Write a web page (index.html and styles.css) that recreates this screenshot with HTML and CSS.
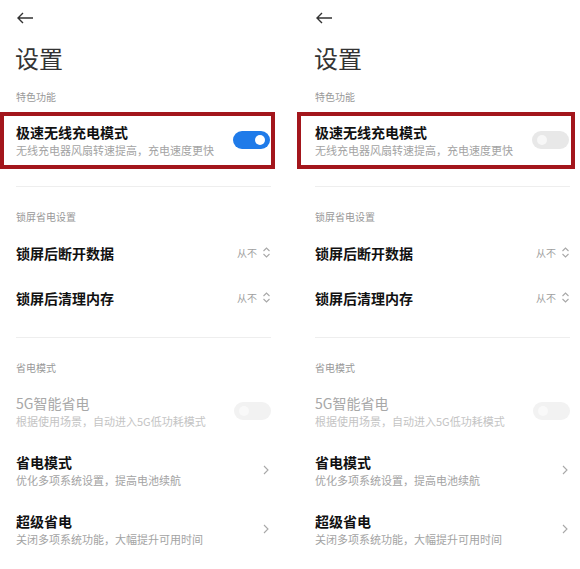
FILE: index.html
```html
<!DOCTYPE html>
<html lang="zh-CN">

<head>
    <meta charset="UTF-8">
    <meta name="viewport" content="width=device-width, initial-scale=1.0">
    <title>设置</title>
    <link rel="stylesheet" href="styles.css">
</head>

<body>
    <main class="compare">
        <!-- left: wireless fast charge on -->
        <section class="panel">
            <div class="back">
                <svg width="18" height="12" viewBox="0 0 18 12"><path d="M17 6H2M7 1L2 6l5 5" /></svg>
            </div>
            <h1 class="page-title">设置</h1>

            <div class="group-label first">特色功能</div>
            <div class="row marked">
                <div class="texts">
                    <div class="name">极速无线充电模式</div>
                    <div class="desc">无线充电器风扇转速提高，充电速度更快</div>
                </div>
                <span class="switch on"></span>
            </div>

            <hr class="divider first-divider">

            <div class="group-label">锁屏省电设置</div>
            <div class="row plain">
                <div class="name">锁屏后断开数据</div>
                <div class="value">从不
                    <svg width="9" height="13" viewBox="0 0 9 13"><path d="M1.5 5L4.5 2l3 3M1.5 8l3 3 3-3" /></svg>
                </div>
            </div>
            <div class="row plain">
                <div class="name">锁屏后清理内存</div>
                <div class="value">从不
                    <svg width="9" height="13" viewBox="0 0 9 13"><path d="M1.5 5L4.5 2l3 3M1.5 8l3 3 3-3" /></svg>
                </div>
            </div>

            <hr class="divider">

            <div class="group-label">省电模式</div>
            <div class="row tall disabled">
                <div class="texts">
                    <div class="name">5G智能省电</div>
                    <div class="desc">根据使用场景，自动进入5G低功耗模式</div>
                </div>
                <span class="switch off-disabled"></span>
            </div>
            <div class="row tall">
                <div class="texts">
                    <div class="name">省电模式</div>
                    <div class="desc">优化多项系统设置，提高电池续航</div>
                </div>
                <svg class="chevron" width="6" height="10" viewBox="0 0 6 10"><path d="M1 1l4 4-4 4" /></svg>
            </div>
            <div class="row tall">
                <div class="texts">
                    <div class="name">超级省电</div>
                    <div class="desc">关闭多项系统功能，大幅提升可用时间</div>
                </div>
                <svg class="chevron" width="6" height="10" viewBox="0 0 6 10"><path d="M1 1l4 4-4 4" /></svg>
            </div>
        </section>

        <!-- right: wireless fast charge off -->
        <section class="panel">
            <div class="back">
                <svg width="18" height="12" viewBox="0 0 18 12"><path d="M17 6H2M7 1L2 6l5 5" /></svg>
            </div>
            <h1 class="page-title">设置</h1>

            <div class="group-label first">特色功能</div>
            <div class="row marked wide">
                <div class="texts">
                    <div class="name">极速无线充电模式</div>
                    <div class="desc">无线充电器风扇转速提高，充电速度更快</div>
                </div>
                <span class="switch"></span>
            </div>

            <hr class="divider first-divider">

            <div class="group-label">锁屏省电设置</div>
            <div class="row plain">
                <div class="name">锁屏后断开数据</div>
                <div class="value">从不
                    <svg width="9" height="13" viewBox="0 0 9 13"><path d="M1.5 5L4.5 2l3 3M1.5 8l3 3 3-3" /></svg>
                </div>
            </div>
            <div class="row plain">
                <div class="name">锁屏后清理内存</div>
                <div class="value">从不
                    <svg width="9" height="13" viewBox="0 0 9 13"><path d="M1.5 5L4.5 2l3 3M1.5 8l3 3 3-3" /></svg>
                </div>
            </div>

            <hr class="divider">

            <div class="group-label">省电模式</div>
            <div class="row tall disabled">
                <div class="texts">
                    <div class="name">5G智能省电</div>
                    <div class="desc">根据使用场景，自动进入5G低功耗模式</div>
                </div>
                <span class="switch off-disabled"></span>
            </div>
            <div class="row tall">
                <div class="texts">
                    <div class="name">省电模式</div>
                    <div class="desc">优化多项系统设置，提高电池续航</div>
                </div>
                <svg class="chevron" width="6" height="10" viewBox="0 0 6 10"><path d="M1 1l4 4-4 4" /></svg>
            </div>
            <div class="row tall">
                <div class="texts">
                    <div class="name">超级省电</div>
                    <div class="desc">关闭多项系统功能，大幅提升可用时间</div>
                </div>
                <svg class="chevron" width="6" height="10" viewBox="0 0 6 10"><path d="M1 1l4 4-4 4" /></svg>
            </div>
        </section>
    </main>
</body>

</html>
```

FILE: styles.css
```css
body, html {
    margin: 0;
    padding: 0;
    background-color: #ffffff;
    font-family: 'Noto Sans CJK SC', 'Noto Sans', sans-serif;
}

.compare {
    display: grid;
    grid-template-columns: 281px 281px;
    column-gap: 18px;
    width: 580px;
    height: 569px;
    overflow: hidden;
}

.panel {
    padding: 0 10px 0 16px;
}

.back {
    height: 26px;
    padding-top: 12px;
    box-sizing: border-box;
}

.back svg {
    display: block;
}

.back path {
    fill: none;
    stroke: #333333;
    stroke-width: 1.4;
}

.page-title {
    margin: 16px 0 0 -1px;
    font-size: 24px;
    line-height: 32px;
    font-weight: 400;
    color: #333333;
}

.group-label {
    margin-top: 22px;
    font-size: 10px;
    line-height: 15px;
    color: #999999;
}

.group-label.first {
    margin-top: 15px;
}

.row {
    display: flex;
    align-items: center;
    justify-content: space-between;
}

.name {
    font-size: 14px;
    line-height: 20px;
    font-weight: 700;
    color: #111111;
}

.desc {
    font-size: 11px;
    line-height: 16px;
    color: #a3a3a3;
    white-space: nowrap;
}

.row.marked {
    margin: 8px -4px 0 -16px;
    padding: 6px 1px 7px 12px;
    border: 4px solid #a3161c;
}

.row.marked.wide {
    margin-left: -18px;
    margin-right: -5px;
    padding-left: 14px;
    padding-right: 2px;
}

.row.plain {
    height: 45px;
}

.group-label + .row.plain {
    margin-top: 6px;
}

.row.tall {
    height: 59px;
}

.group-label + .row.tall {
    margin-top: 6px;
}

.row.disabled .name {
    font-weight: 400;
    color: #a8a8a8;
}

.row.disabled .desc {
    color: #c4c4c4;
}

.value {
    display: flex;
    align-items: center;
    gap: 5px;
    font-size: 10px;
    color: #a0a0a0;
}

.value path,
.chevron path {
    fill: none;
    stroke: #a8a8a8;
    stroke-width: 1.1;
}

.chevron {
    margin-right: 2px;
}

.switch {
    position: relative;
    flex: none;
    width: 37px;
    height: 18px;
    border-radius: 9px;
    background-color: #e8e8e8;
}

.switch::after {
    content: "";
    position: absolute;
    top: 4px;
    left: 5px;
    width: 10px;
    height: 10px;
    border-radius: 50%;
    background-color: #f7f7f7;
}

.switch.on {
    background-color: #1f7be9;
}

.switch.on::after {
    left: auto;
    right: 5px;
    background-color: #ffffff;
}

.switch.off-disabled {
    background-color: #f2f2f2;
}

.switch.off-disabled::after {
    background-color: #f9f9f9;
}

.divider {
    margin: 17px 0 0;
    border: none;
    border-top: 1px solid #eeeeee;
}

.first-divider {
    margin-top: 17px;
}
```
